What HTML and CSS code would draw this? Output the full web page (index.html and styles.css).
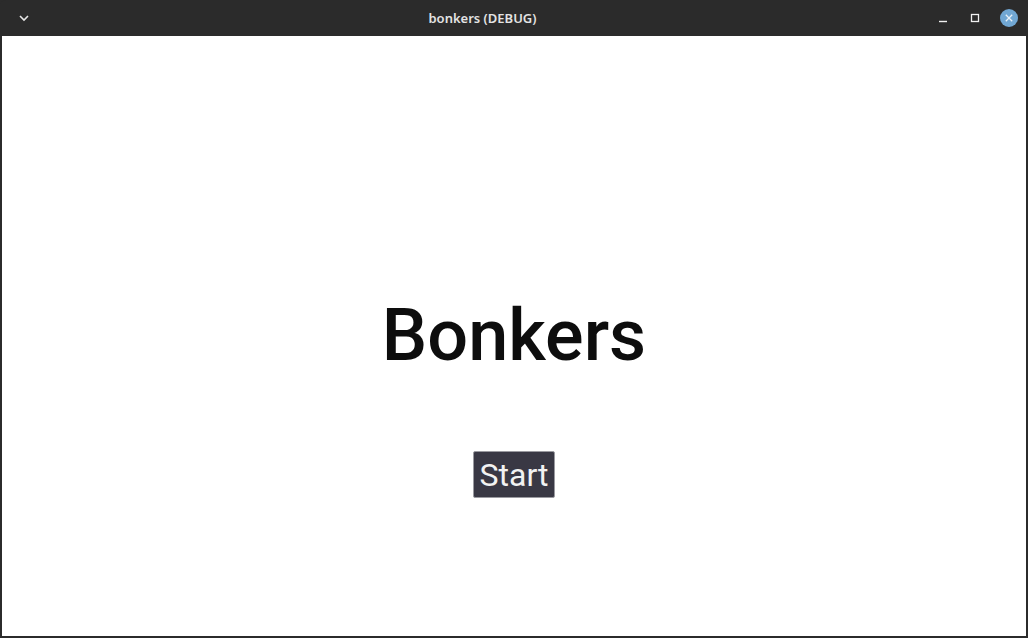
FILE: index.html
```html
<!DOCTYPE html>
<html lang="en">
<head>
    <meta charset="UTF-8">
    <title>bonkers (DEBUG)</title>
    <link rel="stylesheet" href="styles.css">
</head>
<body>

<div class="window">
    <div class="titlebar">
        <div class="menu-btn">
            <svg width="12" height="8" viewBox="0 0 12 8">
                <path d="M2 2 L6 6 L10 2" fill="none" stroke="#e6e6e6" stroke-width="1.6"/>
            </svg>
        </div>
        <div class="title">bonkers (DEBUG)</div>
        <div class="controls">
            <svg class="ctl" width="12" height="12" viewBox="0 0 12 12">
                <path d="M2 9.5 H10" stroke="#f0f0f0" stroke-width="1.4"/>
            </svg>
            <svg class="ctl" width="12" height="12" viewBox="0 0 12 12">
                <rect x="2.5" y="2.5" width="7" height="7" fill="none" stroke="#f0f0f0" stroke-width="1.3"/>
            </svg>
            <svg class="ctl close" width="20" height="20" viewBox="0 0 20 20">
                <circle cx="10" cy="10" r="9" fill="#71a7d3"/>
                <path d="M6.8 6.8 L13.2 13.2 M13.2 6.8 L6.8 13.2" stroke="#e8f1f8" stroke-width="1.3"/>
            </svg>
        </div>
    </div>

    <div class="content">
        <h1 class="heading">Bonkers</h1>
        <button class="start-btn">Start</button>
    </div>
</div>

</body>
</html>
```

FILE: styles.css
```css
html, body {
    margin: 0;
    height: 100%;
    background: #2b2b2b;
}
.window {
    height: 100%;
    box-sizing: border-box;
    display: flex;
    flex-direction: column;
    border: 2px solid #2b2b2b;
    border-top: none;
}
.titlebar {
    height: 36px;
    flex: none;
    display: flex;
    align-items: center;
    background: #2b2b2b;
    border-radius: 6px 6px 0 0;
    margin: 0 -2px;
    padding: 0 9px 0 18px;
}
.menu-btn {
    width: 12px;
    display: flex;
    align-items: center;
}
.title {
    flex: 1;
    text-align: center;
    color: #e3e3e3;
    font-family: "Noto Sans", "DejaVu Sans", sans-serif;
    font-size: 13px;
    font-weight: 600;
    padding-right: 2px;
}
.controls {
    display: flex;
    align-items: center;
    gap: 20px;
}
.ctl {
    display: block;
}
.close {
    margin-left: -2px;
}
.content {
    flex: 1;
    background: #fff;
    display: flex;
    flex-direction: column;
    align-items: center;
    padding-top: 257px;
    box-sizing: border-box;
}
.heading {
    margin: 0;
    font-family: Roboto, "Liberation Sans", sans-serif;
    font-weight: 500;
    font-size: 72px;
    line-height: 86px;
    color: #0d0d0d;
}
.start-btn {
    margin-top: 72px;
    padding: 0 6px;
    height: 47px;
    background: #393844;
    color: #f2f2f2;
    border: 1px solid #9a9aa0;
    border-radius: 2px;
    font-family: Roboto, "Liberation Sans", sans-serif;
    font-size: 32px;
    font-weight: 400;
}
```
